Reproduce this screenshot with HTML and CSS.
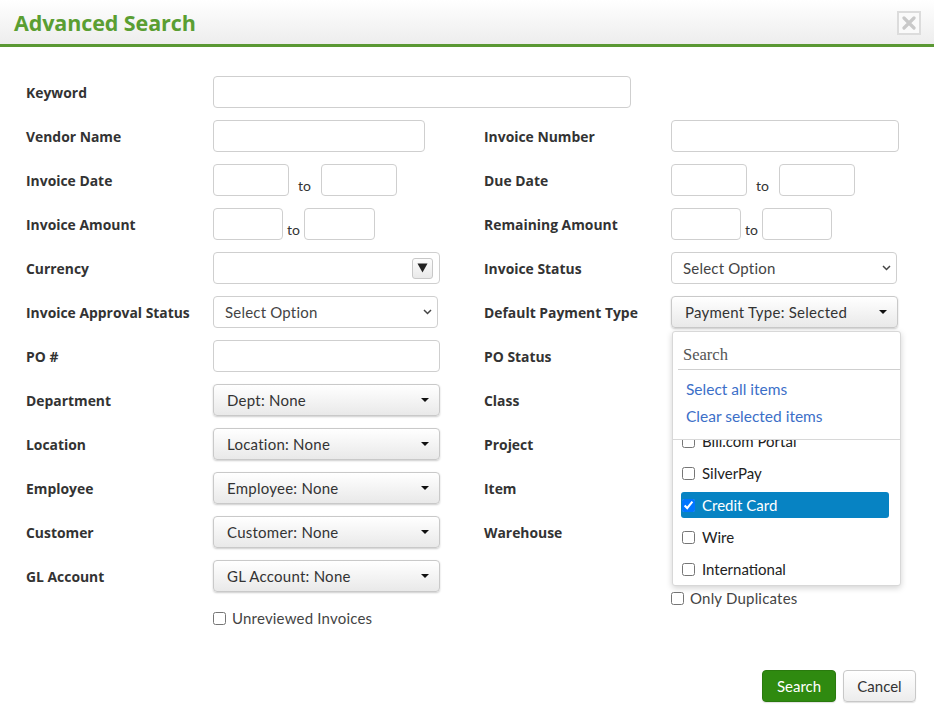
FILE: index.html
```html
<!DOCTYPE html>
<html>
<head>
<meta charset="utf-8">
<link rel="stylesheet" href="styles.css">
</head>
<body>
<header class="hdr">
  <h1 class="title">Advanced Search</h1>
  <button class="close" aria-label="Close">
    <svg width="14" height="14" viewBox="0 0 14 14"><path d="M2 2 L12 12 M12 2 L2 12" stroke="#c9c9c9" stroke-width="3.2" stroke-linecap="round"/></svg>
  </button>
</header>

<main class="form">
  <label class="lbl">Keyword</label>
  <div class="cell span3"><input class="inp w418" type="text"></div>

  <label class="lbl">Vendor Name</label>
  <div class="cell"><input class="inp w212" type="text"></div>
  <label class="lbl">Invoice Number</label>
  <div class="cell"><input class="inp w228" type="text"></div>

  <label class="lbl">Invoice Date</label>
  <div class="cell range wide"><input class="inp w76" type="text"><span class="to">to</span><input class="inp w76" type="text"></div>
  <label class="lbl">Due Date</label>
  <div class="cell range wide"><input class="inp w76" type="text"><span class="to">to</span><input class="inp w76" type="text"></div>

  <label class="lbl">Invoice Amount</label>
  <div class="cell range narrow"><input class="inp w70" type="text"><span class="to">to</span><input class="inp w71" type="text"></div>
  <label class="lbl">Remaining Amount</label>
  <div class="cell range narrow"><input class="inp w70" type="text"><span class="to">to</span><input class="inp w70" type="text"></div>

  <label class="lbl">Currency</label>
  <div class="cell"><div class="combo w227"><span class="combo-btn"><svg width="11" height="10" viewBox="0 0 11 10"><path d="M0.5 0.5 H10.5 L5.5 9.5 Z" fill="#222"/></svg></span></div></div>
  <label class="lbl">Invoice Status</label>
  <div class="cell"><div class="select w226"><span>Select Option</span><svg class="chev" width="9" height="6" viewBox="0 0 9 6"><path d="M1 1 L4.5 4.5 L8 1" fill="none" stroke="#444" stroke-width="1.5"/></svg></div></div>

  <label class="lbl">Invoice Approval Status</label>
  <div class="cell"><div class="select w225"><span>Select Option</span><svg class="chev" width="9" height="6" viewBox="0 0 9 6"><path d="M1 1 L4.5 4.5 L8 1" fill="none" stroke="#444" stroke-width="1.5"/></svg></div></div>
  <label class="lbl">Default Payment Type</label>
  <div class="cell anchor">
    <button class="dd w227"><span>Payment Type: Selected</span><span class="caret"></span></button>
    <div class="menu">
      <div class="menu-search"><input class="search" type="text" placeholder="Search"></div>
      <div class="menu-links">
        <a class="link">Select all items</a>
        <a class="link">Clear selected items</a>
      </div>
      <div class="menu-list">
        <ul class="items">
          <li class="item"><label class="opt"><input type="checkbox" class="cb">Bill.com Portal</label></li>
          <li class="item"><label class="opt"><input type="checkbox" class="cb">SilverPay</label></li>
          <li class="item"><label class="opt active"><input type="checkbox" class="cb" checked>Credit Card</label></li>
          <li class="item"><label class="opt"><input type="checkbox" class="cb">Wire</label></li>
          <li class="item"><label class="opt"><input type="checkbox" class="cb">International</label></li>
        </ul>
      </div>
    </div>
  </div>

  <label class="lbl">PO #</label>
  <div class="cell"><input class="inp w227" type="text"></div>
  <label class="lbl">PO Status</label>
  <div class="cell"></div>

  <label class="lbl">Department</label>
  <div class="cell"><button class="dd w227"><span>Dept: None</span><span class="caret"></span></button></div>
  <label class="lbl">Class</label>
  <div class="cell"></div>

  <label class="lbl">Location</label>
  <div class="cell"><button class="dd w227"><span>Location: None</span><span class="caret"></span></button></div>
  <label class="lbl">Project</label>
  <div class="cell"></div>

  <label class="lbl">Employee</label>
  <div class="cell"><button class="dd w227"><span>Employee: None</span><span class="caret"></span></button></div>
  <label class="lbl">Item</label>
  <div class="cell"></div>

  <label class="lbl">Customer</label>
  <div class="cell"><button class="dd w227"><span>Customer: None</span><span class="caret"></span></button></div>
  <label class="lbl">Warehouse</label>
  <div class="cell"></div>

  <label class="lbl">GL Account</label>
  <div class="cell"><button class="dd w227"><span>GL Account: None</span><span class="caret"></span></button></div>
  <div class="cell"></div>
  <div class="cell"></div>

  <div class="cell"></div>
  <div class="cell"><label class="check"><input type="checkbox" class="cb">Unreviewed Invoices</label></div>
  <div class="cell"></div>
  <div class="cell up"><label class="check"><input type="checkbox" class="cb">Only Duplicates</label></div>
</main>

<footer class="actions">
  <button class="btn primary">Search</button>
  <button class="btn">Cancel</button>
</footer>
</body>
</html>
```

FILE: styles.css
```css
* { box-sizing: border-box; }
html, body { margin: 0; padding: 0; background: #fff; }
body {
  font-family: Lato, "Open Sans", sans-serif;
  color: #333;
  width: 934px;
  height: 710px;
  overflow: hidden;
}

.hdr {
  height: 47px;
  background: linear-gradient(#ffffff, #ededed);
  border-bottom: 3px solid #5a9833;
  display: flex;
  align-items: center;
  justify-content: space-between;
  padding: 0 13px 0 14px;
}
.title {
  margin: 0;
  font-family: "Open Sans", sans-serif;
  font-size: 21.5px;
  font-weight: 700;
  color: #5a9e32;
  letter-spacing: -0.1px;
}
.close {
  width: 24px;
  height: 24px;
  border: 2px solid #dcdcdc;
  background: #fafafa;
  padding: 0;
  display: flex;
  align-items: center;
  justify-content: center;
  margin-top: 2px;
}

.form {
  display: grid;
  grid-template-columns: 187px 271px 187px 1fr;
  grid-template-rows: repeat(12, 44px) 40px;
  align-items: center;
  padding: 23px 0 0 26px;
}
.lbl {
  font-family: "Open Sans", sans-serif;
  font-size: 13.9px;
  font-weight: 700;
  color: #333;
}
.cell { display: flex; align-items: center; }
.span3 { grid-column: 2 / span 3; }
.anchor { position: relative; }
.up { margin-top: -40px; }

.inp {
  height: 32px;
  border: 1px solid #cfcfcf;
  border-radius: 4px;
  background: #fff;
  font: 15px Lato, sans-serif;
  padding: 0 10px;
  outline: none;
}
.w418 { width: 418px; }
.w212 { width: 212px; }
.w228 { width: 228px; }
.w227 { width: 227px; }
.w226 { width: 226px; }
.w225 { width: 225px; }
.w76 { width: 76px; }
.w70 { width: 70px; }
.w71 { width: 71px; }

.range .to {
  font-size: 14px;
  color: #333;
  margin-top: 11px;
}
.wide .to { margin: 11px 10px 0 9px; }
.narrow .to { margin: 11px 4px 0 4px; }

.combo {
  height: 32px;
  border: 1px solid #cfcfcf;
  border-radius: 4px;
  display: flex;
  align-items: center;
  justify-content: flex-end;
  padding-right: 6px;
}
.combo-btn {
  width: 21px;
  height: 21px;
  border: 1px solid #c8c8c8;
  border-radius: 3px;
  background: linear-gradient(#fdfdfd, #e9e9e9);
  display: flex;
  align-items: center;
  justify-content: center;
}

.select {
  height: 32px;
  border: 1px solid #cfcfcf;
  border-radius: 4px;
  background: #fff;
  display: flex;
  align-items: center;
  justify-content: space-between;
  padding: 0 5px 0 11px;
  font-size: 15px;
  letter-spacing: 0.2px;
  color: #444;
}

.dd {
  height: 32px;
  border: 1px solid #c9c9c9;
  border-radius: 4px;
  background: linear-gradient(#ffffff, #e9e9e9);
  box-shadow: 0 1px 2px rgba(0,0,0,0.2);
  display: flex;
  align-items: center;
  justify-content: space-between;
  padding: 0 10px 0 13px;
  font: 15px Lato, sans-serif;
  letter-spacing: 0.25px;
  color: #333;
}
.caret {
  width: 0;
  height: 0;
  border-left: 4px solid transparent;
  border-right: 4px solid transparent;
  border-top: 4px solid #111;
}

.menu {
  position: absolute;
  top: 35px;
  left: 1px;
  width: 229px;
  background: #fff;
  border: 1px solid #d8d8d8;
  border-radius: 3px;
  box-shadow: 0 2px 6px rgba(0,0,0,0.18);
  z-index: 5;
}
.menu-search { padding: 9px 0 0 5px; }
.search {
  width: 100%;
  height: 29px;
  border: none;
  border-bottom: 1px solid #cfcfcf;
  font: 16.5px "Liberation Serif", serif;
  padding: 0 5px;
  outline: none;
}
.search::placeholder { color: #555; }
.menu-links {
  display: flex;
  flex-direction: column;
  padding: 6px 0 9px 13px;
}
.link {
  font-size: 15.5px;
  line-height: 27px;
  color: #3c6fc8;
}
.menu-list {
  border-top: 1px solid #d8d8d8;
  height: 146px;
  overflow: hidden;
}
.items {
  list-style: none;
  margin: -15px 0 0 0;
  padding: 0;
}
.item {
  height: 32px;
  padding: 3px 11px 3px 8px;
}
.opt {
  height: 26px;
  display: flex;
  align-items: center;
  border-radius: 3px;
  font-size: 15px;
  color: #222;
  padding-left: 1px;
}
.opt.active {
  background: #0783c3;
  color: #fff;
}
.cb {
  width: 13px;
  height: 13px;
  margin: 0 7px 0 0;
}
.check {
  display: flex;
  align-items: center;
  font-size: 15px;
  letter-spacing: 0.2px;
  color: #444;
}
.check .cb { margin-right: 6px; }

.actions {
  display: flex;
  justify-content: flex-end;
  gap: 7px;
  padding: 32px 18px 0 0;
}
.btn {
  height: 32px;
  width: 73px;
  border: 1px solid #c8c8c8;
  border-radius: 4px;
  background: linear-gradient(#ffffff, #ececec);
  font: 15px Lato, sans-serif;
  color: #333;
  box-shadow: 0 1px 1px rgba(0,0,0,0.12);
}
.btn.primary {
  width: 74px;
  background: #2f8a10;
  border-color: #2a7a0e;
  color: #fff;
}
```
